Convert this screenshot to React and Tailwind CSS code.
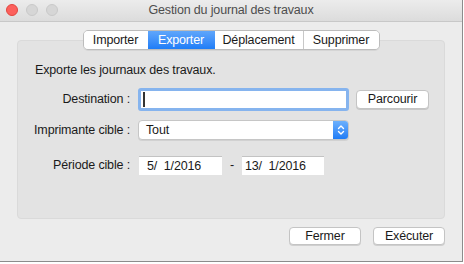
import React from 'react';

const font = { fontFamily: '"Liberation Sans", Arial, sans-serif' };

function Tab({ label, active, first, last }) {
  return (
    <div
      className={
        'flex h-[18px] items-center justify-center text-[12.5px] tracking-[-0.15px] ' +
        (active
          ? 'bg-gradient-to-b from-[#5fa6fb] to-[#1d7df7] text-white'
          : 'bg-white text-[#1a1a1a]') +
        (first ? ' rounded-l-[4px]' : '') +
        (last ? ' rounded-r-[4px]' : '')
      }
    >
      {label}
    </div>
  );
}

function MacButton({ children, className }) {
  return (
    <div
      className={
        'flex items-center justify-center rounded-[4px] border border-[#c4c4c4] bg-white text-[12.5px] tracking-[-0.15px] text-[#1a1a1a] shadow-[0_1px_0_rgba(0,0,0,0.12)] ' +
        className
      }
    >
      {children}
    </div>
  );
}

function App() {
  return (
    <div className="h-[264px] w-[464px] bg-white" style={font}>
      <div className="flex h-[262px] w-[463px] flex-col border-b border-r border-[#8c8c8c] bg-[#ececec]">
        {/* title bar */}
        <div className="relative flex h-[22px] items-center justify-center border-b border-[#c8c8c8] bg-gradient-to-b from-[#ececec] to-[#dcdcdc]">
          <div className="absolute left-[6px] top-[4px] flex gap-[8px]">
            <span className="h-[12px] w-[12px] rounded-full border border-[#e2463f] bg-[#fc605c]" />
            <span className="h-[12px] w-[12px] rounded-full border border-[#c9c9c9] bg-[#d6d6d6]" />
            <span className="h-[12px] w-[12px] rounded-full border border-[#c9c9c9] bg-[#d6d6d6]" />
          </div>
          <span className="text-[12.5px] tracking-[-0.15px] text-[#4d4d4d]">Gestion du journal des travaux</span>
        </div>

        {/* tabs */}
        <div className="mt-[8px] flex justify-center">
          <div className="relative z-10 flex rounded-[5px] border border-[#bcbcbc] shadow-[0_1px_0_rgba(0,0,0,0.06)]">
            <div className="w-[64px]"><Tab label="Importer" first /></div>
            <div className="w-[67px]"><Tab label="Exporter" active /></div>
            <div className="w-[89px] border-r border-[#c8c8c8]"><Tab label="Déplacement" /></div>
            <div className="w-[75px]"><Tab label="Supprimer" last /></div>
          </div>
        </div>

        {/* group box */}
        <div className="mx-[17px] -mt-[10px] h-[179px] w-[428px] rounded-[4px] border border-[#dadada] bg-[#e3e3e3] pt-[21px] text-[12.5px] tracking-[-0.15px] text-[#1a1a1a]">
          <p className="pl-[17px] leading-[16px]">
            Exporte les journaux des travaux.
          </p>

          <div className="mt-[10px] grid grid-cols-[112px_1fr] items-center gap-x-[8px] gap-y-[9px]">
            <span className="text-right">Destination :</span>
            <div className="flex items-center">
              <div className="flex h-[23px] w-[211px] items-center rounded-[3px] border-[3px] border-[#86b4ee] bg-white">
                <span className="ml-[2px] h-[15px] w-[1.5px] bg-[#333]" />
              </div>
              <MacButton className="ml-[7px] h-[19px] w-[73px]">Parcourir</MacButton>
            </div>

            <span className="text-right">Imprimante cible :</span>
            <div className="flex h-[20px] w-[211px] items-center overflow-hidden rounded-[4px] border border-[#c6c6c6] bg-white shadow-[0_1px_0_rgba(0,0,0,0.08)]">
              <span className="flex-1 pl-[7px]">Tout</span>
              <span className="flex h-full w-[15px] items-center justify-center bg-gradient-to-b from-[#6cb0fc] to-[#1e7cf6]">
                <svg width="8" height="12" viewBox="0 0 8 12" fill="none" stroke="white" strokeWidth="1.4" strokeLinecap="round" strokeLinejoin="round">
                  <path d="M1.5 4.5 L4 2 L6.5 4.5" />
                  <path d="M1.5 7.5 L4 10 L6.5 7.5" />
                </svg>
              </span>
            </div>
          </div>

          <div className="mt-[16px] flex items-center">
            <span className="w-[112px] text-right">Période cible :</span>
            <div className="ml-[9px] flex h-[19px] w-[83px] items-center border-t border-[#c3c3c3] bg-white pl-[8px]">
              5/&nbsp;&nbsp;1/2016
            </div>
            <span className="w-[20px] text-center">-</span>
            <div className="flex h-[19px] w-[82px] items-center border-t border-[#c3c3c3] bg-white pl-[3px]">
              13/&nbsp;&nbsp;1/2016
            </div>
          </div>
        </div>

        {/* footer buttons */}
        <div className="mt-[8px] flex justify-end gap-[12px] pr-[17px]">
          <MacButton className="h-[18px] w-[72px]">Fermer</MacButton>
          <MacButton className="h-[18px] w-[72px]">Exécuter</MacButton>
        </div>
      </div>
    </div>
  );
}

export default App;
